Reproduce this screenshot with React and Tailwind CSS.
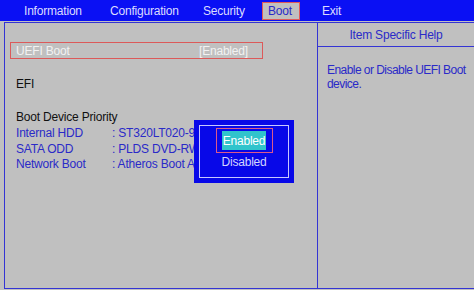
import React from "react";

const menu = [
  { label: "Information", w: "w-[86px]" },
  { label: "Configuration", w: "w-[93px]" },
  { label: "Security", w: "w-[59px]" },
];

const devices = [
  { name: "Internal HDD", value: "ST320LT020-9YG142" },
  { name: "SATA ODD", value: "PLDS DVD-RW DS8A5SH" },
  { name: "Network Boot", value: "Atheros Boot Agent" },
];

const App = () => {
  return (
    <div className="w-[474px] h-[290px] bg-[#c0c0c0] relative overflow-hidden font-['Liberation_Sans',sans-serif] text-[12px] leading-none tracking-[-0.2px]">
      {/* top menu bar */}
      <div className="h-[21px] bg-[#0a10f4] flex items-center pl-[24px] text-[#dcdcff]">
        {menu.map((m, i) => (
          <div key={i} className={`${m.w} whitespace-nowrap`}>
            {m.label}
          </div>
        ))}
        <div className="w-[38px] h-[18px] mt-px bg-[#c0c0c0] border border-[#e05a5a] flex items-center pl-[5px] text-[#2a2ac8]">
          Boot
        </div>
        <div className="ml-[22px]">Exit</div>
      </div>

      {/* body */}
      <div className="mt-px ml-[4px] h-[267px] border-l border-t border-b border-[#3434d4] flex">
        <div className="w-[313px] border-r border-[#3434d4] pt-[19px] pl-[5px]">
          <div className="w-[253px] h-[17px] border border-[#dc5a5a] flex items-center text-[#f2f2f2]">
            <span className="pl-[5px] w-[188px]">UEFI Boot</span>
            <span>[Enabled]</span>
          </div>
          <div className="pl-[6px] mt-[19px] text-[#101010]">EFI</div>
          <div className="pl-[6px] mt-[21px] text-[#101010]">Boot Device Priority</div>
          <div className="pl-[6px] mt-[4px] flex flex-col gap-[3px] text-[#2a2ac8]">
            {devices.map((d, i) => (
              <div key={i} className="flex w-[179px] h-[12.5px] items-center whitespace-nowrap overflow-hidden">
                <span className="w-[96px] shrink-0">{d.name}</span>
                <span>: {d.value}</span>
              </div>
            ))}
          </div>
        </div>
        <div className="flex-1">
          <div className="h-[24px] border-b border-[#3434d4] flex items-center justify-center text-[#2a2ac8]">
            Item Specific Help
          </div>
          <div className="pl-[9px] pt-[16px] text-[#2a2ac8] leading-[14px] whitespace-nowrap tracking-[-0.55px]">
            Enable or Disable UEFI Boot
            <br />
            device.
          </div>
        </div>
      </div>

      {/* option popup */}
      <div className="absolute left-[194px] top-[120px] w-[100px] h-[63px] bg-[#0808e8] p-[5px]">
        <div className="w-full h-full border border-[#c8c8ff] flex flex-col items-center pt-[2px]">
          <div className="w-[57px] h-[25px] border border-[#dc5a8a] flex items-center justify-center">
            <span className="bg-[#30c4cc] text-white px-[1px] h-[19px] flex items-center">Enabled</span>
          </div>
          <div className="mt-[3px] text-[#d4d4ff]">Disabled</div>
        </div>
      </div>
    </div>
  );
};

export default App;
